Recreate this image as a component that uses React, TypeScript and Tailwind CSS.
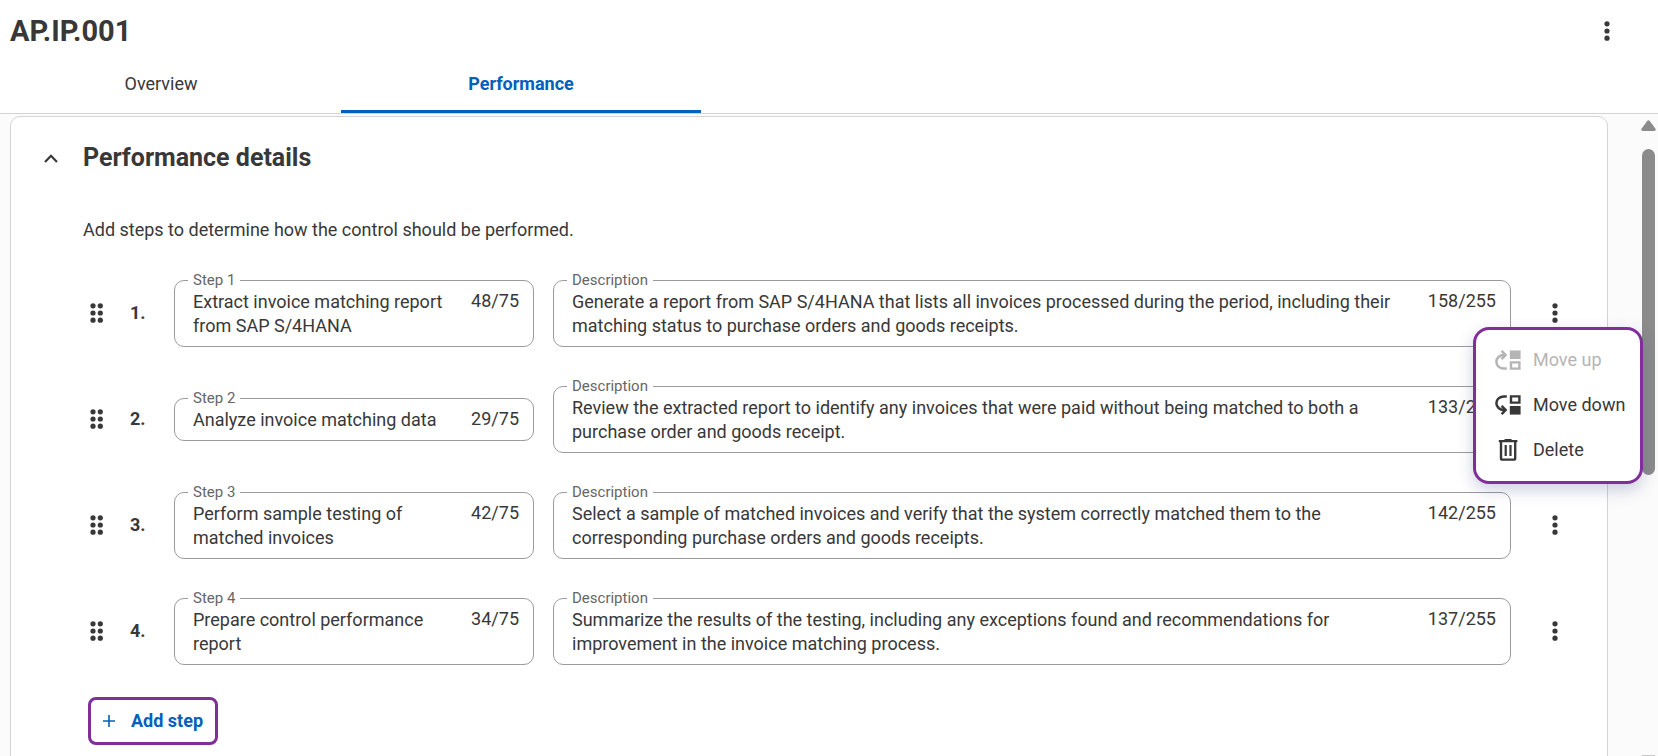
import { useState } from "react";

interface Step {
  title: string;
  description: string;
}

const initialSteps: Step[] = [
  {
    title: "Extract invoice matching report from SAP S/4HANA",
    description:
      "Generate a report from SAP S/4HANA that lists all invoices processed during the period, including their matching status to purchase orders and goods receipts.",
  },
  {
    title: "Analyze invoice matching data",
    description:
      "Review the extracted report to identify any invoices that were paid without being matched to both a purchase order and goods receipt.",
  },
  {
    title: "Perform sample testing of matched invoices",
    description:
      "Select a sample of matched invoices and verify that the system correctly matched them to the corresponding purchase orders and goods receipts.",
  },
  {
    title: "Prepare control performance report",
    description:
      "Summarize the results of the testing, including any exceptions found and recommendations for improvement in the invoice matching process.",
  },
];

function KebabIcon() {
  return (
    <svg width="6" height="20" viewBox="0 0 6 20" fill="currentColor" aria-hidden="true">
      <circle cx="3" cy="2.8" r="2.6" />
      <circle cx="3" cy="10" r="2.6" />
      <circle cx="3" cy="17.2" r="2.6" />
    </svg>
  );
}

function DragIcon() {
  return (
    <svg width="14" height="20" viewBox="0 0 14 20" fill="currentColor" aria-hidden="true">
      {[2.8, 10, 17.2].map((y) => (
        <g key={y}>
          <circle cx="3" cy={y} r="2.6" />
          <circle cx="10.3" cy={y} r="2.6" />
        </g>
      ))}
    </svg>
  );
}

function MoveIcon({ down = false }: { down?: boolean }) {
  return (
    <svg width="26" height="20" viewBox="0 0 26 20" aria-hidden="true">
      <g transform={down ? "matrix(1 0 0 -1 0 20)" : undefined}>
        <path
          d="M11.8 18.6H9C4.6 18.6 1.4 15.6 1.4 11.8S4.6 5 9 5H10.5"
          fill="none"
          stroke="currentColor"
          strokeWidth="2.5"
        />
        <path d="M6.6 .9L10.6 5L6.6 9.1" fill="none" stroke="currentColor" strokeWidth="2.5" />
        <path d="M14.8 .4h10.8v8.6H14.8z" fill="currentColor" />
        <path d="M16 12.4h8.4v6.2H16z" fill="none" stroke="currentColor" strokeWidth="2.4" />
      </g>
    </svg>
  );
}

function TrashIcon() {
  return (
    <svg width="26" height="22" viewBox="0 0 26 22" fill="none" stroke="currentColor" aria-hidden="true">
      <path d="M3.8 2.2H22.4M9.6 1.2H16.6" strokeWidth="2.2" />
      <path d="M6 2V19.2Q6 20.6 7.4 20.6H18.8Q20.2 20.6 20.2 19.2V2" strokeWidth="2.4" />
      <path d="M10.7 6V17M15.5 6V17" strokeWidth="2.2" />
    </svg>
  );
}

interface FieldProps {
  id: string;
  label: string;
  value: string;
  max: number;
  onChange: (value: string) => void;
}

function CountedField({ id, label, value, max, onChange }: FieldProps) {
  return (
    <fieldset className="w-full min-w-0 rounded-[10px] border border-[#9b9b9b] pr-3.5 pb-2 pl-[13px]">
      <legend className="px-[5px] text-[15px] leading-5 text-[#666]">
        <label htmlFor={id}>{label}</label>
      </legend>
      <div className="flex items-start gap-6 pl-[5px]">
        <textarea
          id={id}
          rows={1}
          maxLength={max}
          value={value}
          onChange={(e) => onChange(e.target.value)}
          className="field-sizing-content block min-w-0 flex-1 resize-none leading-6 outline-none"
        />
        <span className="leading-[22px]">
          {value.length}/{max}
        </span>
      </div>
    </fieldset>
  );
}

function StepMenu() {
  return (
    <div
      role="menu"
      className="absolute top-full -right-[74px] z-10 flex w-[170px] flex-col rounded-2xl border-3 border-[#7f2f97] bg-white py-2 shadow-[0_6px_16px_rgba(60,70,130,0.25)]"
    >
      <button role="menuitem" disabled className="flex h-[45px] items-center gap-3 pl-[19px] text-[#b5b5b5]">
        <MoveIcon />
        Move up
      </button>
      <button role="menuitem" className="flex h-[45px] items-center gap-3 pl-[19px]">
        <MoveIcon down />
        Move down
      </button>
      <button role="menuitem" className="flex h-[45px] items-center gap-3 pl-[19px]">
        <TrashIcon />
        Delete
      </button>
    </div>
  );
}

export default function App() {
  const [steps, setSteps] = useState(initialSteps);
  const [openMenu, setOpenMenu] = useState<number | null>(0);
  const [expanded, setExpanded] = useState(true);

  const update = (index: number, patch: Partial<Step>) =>
    setSteps((prev) => prev.map((s, i) => (i === index ? { ...s, ...patch } : s)));

  return (
    <div className="flex h-screen flex-col overflow-hidden bg-[#fbfbfb] font-[Roboto,sans-serif] text-[18px] leading-6 text-[#383838]">
      <header className="border-b border-[#d4d4d4] bg-white">
        <div className="flex h-[62px] items-center justify-between pr-[37px] pl-2.5">
          <h1 className="text-[29px] leading-9 font-bold">AP.IP.001</h1>
          <button aria-label="More actions" className="flex size-7 items-center justify-center">
            <KebabIcon />
          </button>
        </div>
        <nav className="-ml-[19px] flex">
          <button className="h-[51px] w-[360px] border-b-3 border-transparent pb-1">Overview</button>
          <button className="h-[51px] w-[360px] border-b-3 border-[#0061bd] pb-1 font-bold text-[#0061bd]">
            Performance
          </button>
        </nav>
      </header>

      <main className="flex min-h-0 flex-1">
        <div className="min-w-0 flex-1 pt-0.5 pr-[31px] pl-2.5">
          <section className="min-h-full rounded-t-[10px] border border-[#d4d4d4] bg-white pt-[25px] pr-[38px] pb-10 pl-[72px]">
            <div className="-ml-[42px] flex items-center gap-[22px]">
              <button
                aria-label="Toggle performance details"
                aria-expanded={expanded}
                onClick={() => setExpanded(!expanded)}
                className="flex size-5 items-center justify-center"
              >
                <svg width="14" height="10" viewBox="0 0 14 10" fill="none" stroke="currentColor" strokeWidth="2.2" aria-hidden="true">
                  <path d="M1 9L7 2.8L13 9" />
                </svg>
              </button>
              <h2 className="text-[25px] leading-8 font-bold">Performance details</h2>
            </div>
            {expanded && (
              <>
                <p className="mt-11">Add steps to determine how the control should be performed.</p>

                <ol className="mt-7 flex flex-col gap-[29px]">
                  {steps.map((step, i) => (
                    <li key={i} className="flex items-center">
                      <button aria-label="Drag step" className="ml-[7px] flex w-10 shrink-0 cursor-grab pt-2">
                        <DragIcon />
                      </button>
                      <span className="w-11 shrink-0 pt-2 font-bold">{i + 1}.</span>
                      <div className="w-[360px] shrink-0">
                        <CountedField
                          id={`step-${i}`}
                          label={`Step ${i + 1}`}
                          value={step.title}
                          max={75}
                          onChange={(title) => update(i, { title })}
                        />
                      </div>
                      <div className="ml-[19px] min-w-0 flex-1">
                        <CountedField
                          id={`description-${i}`}
                          label="Description"
                          value={step.description}
                          max={255}
                          onChange={(description) => update(i, { description })}
                        />
                      </div>
                      <div className="relative mt-2 ml-[30px]">
                        <button
                          aria-label="Step actions"
                          onClick={() => setOpenMenu(openMenu === i ? null : i)}
                          className="flex size-7 items-center justify-center"
                        >
                          <KebabIcon />
                        </button>
                        {openMenu === i && <StepMenu />}
                      </div>
                    </li>
                  ))}
                </ol>

                <button
                  onClick={() => setSteps([...steps, { title: "", description: "" }])}
                  className="mt-8 ml-[5px] flex h-12 items-center gap-4 rounded-lg border-3 border-[#7f2f97] px-3 font-bold text-[#0061bd]"
                >
                  <svg width="12" height="12" viewBox="0 0 12 12" stroke="currentColor" strokeWidth="1.6" aria-hidden="true">
                    <path d="M6 0V12M0 6H12" />
                  </svg>
                  Add step
                </button>
              </>
            )}
          </section>
        </div>
        <div className="flex w-[19px] shrink-0 flex-col items-center justify-between overflow-hidden pt-1.5" aria-hidden="true">
          <div className="flex flex-col items-center">
            <svg width="15" height="11" viewBox="0 0 15 11" fill="#8b8b8b">
              <path d="M6.4 .8Q7.5 -.5 8.6 .8L14.5 8.8Q15.2 10.8 13.5 11H1.5Q-.2 10.8 .5 8.8Z" />
            </svg>
            <div className="mt-[18px] h-[326px] w-[13px] rounded-full bg-[#8b8b8b]" />
          </div>
          <div className="h-px w-[13px] bg-[#c8c8c8]" />
        </div>
      </main>
    </div>
  );
}
